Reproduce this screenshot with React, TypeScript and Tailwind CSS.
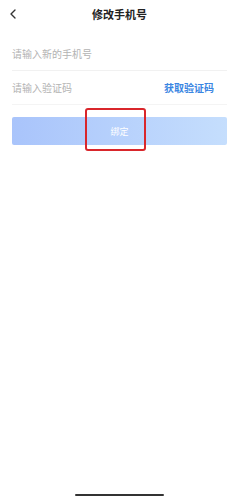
import { ChevronLeft } from 'lucide-react'

const font = { fontFamily: '"Noto Sans CJK SC", "Noto Sans", sans-serif' }

export default function App() {
  return (
    <div className="relative h-[500px] w-[239px] bg-white overflow-hidden" style={font}>
      <div className="relative flex h-[28px] items-center justify-center">
        <ChevronLeft className="absolute left-[5px] top-[6px] h-[16px] w-[16px] text-[#333]" strokeWidth={2} />
        <p className="text-[11px] font-bold leading-none text-[#222]">修改手机号</p>
      </div>

      <div className="px-[12px] pt-[9px]">
        <div className="flex h-[34px] items-center border-b border-[#f1f1f1]">
          <p className="text-[10px] leading-none text-[#b3b3b3]">请输入新的手机号</p>
        </div>
        <div className="flex h-[34px] items-center justify-between border-b border-[#f4f4f4]">
          <p className="text-[10px] leading-none text-[#b3b3b3]">请输入验证码</p>
          <p className="mr-[13px] text-[10px] font-semibold leading-none text-[#3b86e2]">获取验证码</p>
        </div>

        <div className="relative mt-[12px] flex h-[28px] items-center justify-center rounded-[2px] bg-gradient-to-r from-[#a9c4fb] to-[#c5defd]">
          <p className="text-[9px] leading-none text-white">绑定</p>
          <div className="absolute left-[73px] top-[-9px] h-[43px] w-[61px] rounded-[3px] border-2 border-[#d9262b]" />
        </div>
      </div>

      <div className="absolute bottom-[4px] left-[75px] h-[2px] w-[89px] rounded-full bg-[#333]" />
    </div>
  )
}
